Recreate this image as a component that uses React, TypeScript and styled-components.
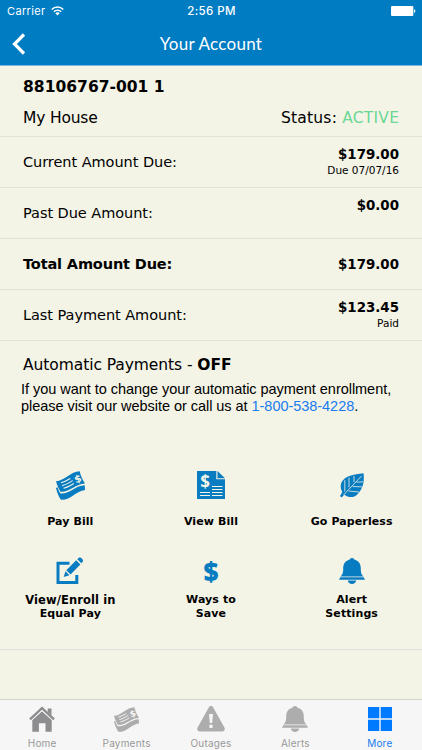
import React from "react";
import styled, { createGlobalStyle } from "styled-components";

const rows = [
  { label: "Current Amount Due:", amount: "$179.00", note: "Due 07/07/16" },
  { label: "Past Due Amount:", amount: "$0.00", note: "\u00a0" },
  { label: "Total Amount Due:", amount: "$179.00", strong: true },
  { label: "Last Payment Amount:", amount: "$123.45", note: "Paid" },
];

const BackIcon = () => (
  <svg width="14" height="22" viewBox="0 0 14 22" fill="none">
    <path d="M12 1.5 2.5 11 12 20.5" stroke="#fff" strokeWidth="3.2" />
  </svg>
);

const WifiIcon = () => (
  <svg width="13" height="10" viewBox="0 0 13 10" fill="none" stroke="#fff">
    <path d="M.7 3.5a8.2 8.2 0 0 1 11.6 0" strokeWidth="1.5" />
    <path d="M2.8 5.8a5.2 5.2 0 0 1 7.4 0" strokeWidth="1.5" />
    <path d="M4.4 7.3a3 3 0 0 1 4.2 0L6.5 9.5z" fill="#fff" stroke="none" />
  </svg>
);

const BatteryIcon = () => (
  <svg width="25" height="10" viewBox="0 0 25 10" fill="#fff">
    <rect width="22.3" height="10" rx="1" />
    <path d="M23 3.2c1.8.3 1.8 3.3 0 3.6z" />
  </svg>
);

const BillsIcon = ({ cut, size = 29 }: { cut: string; size?: number }) => (
  <svg width={size} height={size} viewBox="0 0 29 29">
    <path
      d="M0 10.2C8.500 9.800 14.500.4 23.700.2c.9 4.400 2.700 8.500 5.300 12.200-9.500.5-15.500 9-24.500 8.300C2.500 17.500 1 14 0 10.200z"
      fill="currentColor"
    />
    <path
      d="M0 16.900 1.400 16.300c.8 2.200 1.700 4.200 2.900 6.100 9.700.7 14.700-8 24.500-8.200l.2 4.800C19.700 20 14.800 29.400 5 28.800 2.600 25.200 1 21.200 0 16.900z"
      fill="currentColor"
    />
    <path
      d="M5 11.800c3.200-.9 6.300-2.500 9.300-4.300M6.200 14.600c3.700-.9 7.200-2.900 10.500-5M7.500 17.300c3.700-.8 7-2.700 10.300-4.800"
      stroke={cut}
      strokeWidth="1.100"
      fill="none"
    />
    <BillSign x="21.800" y="11.200" fill={cut} transform="rotate(-20 21.800 7.500)">
      $
    </BillSign>
  </svg>
);

const DocumentIcon = () => (
  <svg width="28" height="28" viewBox="0 0 28 28">
    <path d="M0 0h19.300v8.300H28V28H0z" fill="currentColor" />
    <path d="M20.500 0v7.200H28z" fill="currentColor" />
    <path
      d="M15 15.500h10.500M15 18.500h10.500M3 21.500h10M15 21.500h10.500M3 24.500h10M15 24.500h10.500"
      stroke="#f3f3e6"
      strokeWidth="1"
    />
    <DocumentSign x="8" y="16.500">
      $
    </DocumentSign>
  </svg>
);

const LeafIcon = () => (
  <svg width="24" height="25" viewBox="0 0 24 25">
    <path
      d="M23.500.200C13 1.400 5.500 3 2 8.500c-2 3.500-1.500 7 .300 10.500L0 23l1.600 1.500L4.300 21.700c4 3 8.600 3.200 12.200.500C22.300 17.600 24.800 9.300 23.500.200z"
      fill="currentColor"
    />
    <path
      d="M3.500 22 21.500 3M4.800 18.500V7.200M9 14.500V4.600M14 9V3M8.500 18l10.500 1M12.700 13.500l9.500.400M16.500 9.200l6.500-.400"
      stroke="#f3f3e6"
      strokeWidth=".8"
      fill="none"
    />
  </svg>
);

const EditIcon = () => (
  <svg width="28" height="28" viewBox="0 0 28 28">
    <path
      d="M13.500 6.300H2v19.200h18.800V18"
      stroke="currentColor"
      strokeWidth="3"
      fill="none"
    />
    <path
      d="m7.700 20 1.800-5.700 3.900 3.900zM10.300 13.200 20.200 3.300l4.200 4.200-9.900 9.900zM21.300 2.300l1.500-1.500C24.500-.600 28.200 2.900 26.700 4.800L25.300 6.300z"
      fill="currentColor"
    />
  </svg>
);

const BellIcon = () => (
  <svg width="26" height="26" viewBox="0 0 26 26" fill="currentColor">
    <path d="M13 0c1.300 0 2.300.700 2.500 1.800 4.500 1.100 6.300 4.400 6.300 8.700 0 4.300.600 6 2.700 7.900h-23c2.100-1.900 2.700-3.600 2.700-7.900 0-4.300 1.800-7.600 6.300-8.700C10.700.700 11.700 0 13 0z" />
    <path d="M1.300 19.200h23.400l1.300 2.500H0zM8.800 22.500h8.400c-.300 2-2 3.500-4.200 3.500s-3.900-1.500-4.200-3.500z" />
  </svg>
);

const HouseIcon = () => (
  <svg width="26" height="26" viewBox="0 0 26 26">
    <path
      d="M18.700 2.500h3.800v7l-3.800-3.500zM13 5.200 22.700 14v11.800h-6.200v-8.600H9.900v8.600H3.300V14z"
      fill="currentColor"
    />
    <path
      d="m1 13.300 12-11.200 12 11.200"
      fill="none"
      stroke="currentColor"
      strokeWidth="2.500"
    />
    <path
      d="m2.600 14.300 10.400-9.700 10.400 9.700"
      fill="none"
      stroke="#f6f6f6"
      strokeWidth=".8"
    />
  </svg>
);

const WarningIcon = () => (
  <svg width="28" height="26" viewBox="0 0 28 26">
    <path
      d="M11.800 1.500c1-1.900 3.400-1.900 4.400 0l11.200 20c1 2-.1 4-2.200 4H2.800c-2.100 0-3.200-2-2.200-4z"
      fill="currentColor"
    />
    <path d="M12 8h4l-.8 9h-2.400zM12.400 18.800h3.200V22h-3.200z" fill="#f6f6f6" />
  </svg>
);

const GridIcon = () => (
  <svg width="24" height="24" viewBox="0 0 24 24" fill="currentColor">
    <path d="M0 0h11.300v11.300H0zM12.700 0H24v11.300H12.700zM0 12.700h11.300V24H0zM12.700 12.700H24V24H12.700z" />
  </svg>
);

const actions = [
  { lines: ["Pay Bill"], icon: <BillsIcon cut="#f3f3e6" /> },
  { lines: ["View Bill"], icon: <DocumentIcon /> },
  { lines: ["Go Paperless"], icon: <LeafIcon /> },
  { lines: ["View/Enroll in", "Equal Pay"], icon: <EditIcon /> },
  { lines: ["Ways to", "Save"], sign: true },
  { lines: ["Alert", "Settings"], icon: <BellIcon /> },
];

const tabs = [
  { title: "Home", icon: <HouseIcon />, color: "#8d8d8f" },
  { title: "Payments", icon: <BillsIcon cut="#f6f6f6" size={25} />, color: "#adadad" },
  { title: "Outages", icon: <WarningIcon />, color: "#adadad" },
  { title: "Alerts", icon: <BellIcon />, color: "#adadad" },
  { title: "More", icon: <GridIcon />, color: "#007aff", active: true },
];

export default function App() {
  return (
    <Screen>
      <GlobalStyle />
      <Header>
        <StatusBar>
          <Carrier>
            Carrier <WifiIcon />
          </Carrier>
          <Time>2:56 PM</Time>
          <Battery>
            <BatteryIcon />
          </Battery>
        </StatusBar>
        <NavBar>
          <BackButton aria-label="Back">
            <BackIcon />
          </BackButton>
          <Title>Your Account</Title>
        </NavBar>
      </Header>
      <Account>
        <AccountNumber>88106767-001 1</AccountNumber>
        <AccountLine>
          <HouseName>My House</HouseName>
          <Status>
            Status: <Active>ACTIVE</Active>
          </Status>
        </AccountLine>
      </Account>
      {rows.map((row) => (
        <Row key={row.label}>
          <Label $strong={row.strong}>{row.label}</Label>
          <Values>
            <Amount>{row.amount}</Amount>
            {row.note && <Note>{row.note}</Note>}
          </Values>
        </Row>
      ))}
      <Automatic>
        <AutomaticTitle>
          Automatic Payments - <b>OFF</b>
        </AutomaticTitle>
        <Help>
          <HelpLine>
            If you want to change your automatic payment enrollment,
          </HelpLine>
          <HelpLine>
            please visit our website or call us at <Phone>1-800-538-4228</Phone>.
          </HelpLine>
        </Help>
      </Automatic>
      <Actions>
        {actions.map((action) => (
          <Action key={action.lines[0]}>
            <ActionIcon $tall={action.lines.length === 1}>
              {action.sign ? <Dollar>$</Dollar> : action.icon}
            </ActionIcon>
            {action.lines.map((line) => (
              <ActionLine key={line} $wide={line.includes("/")}>
                {line}
              </ActionLine>
            ))}
          </Action>
        ))}
      </Actions>
      <TabBar>
        {tabs.map((tab) => (
          <Tab key={tab.title} $color={tab.color}>
            <TabIcon>{tab.icon}</TabIcon>
            <TabTitle $active={tab.active}>{tab.title}</TabTitle>
          </Tab>
        ))}
      </TabBar>
    </Screen>
  );
}

const GlobalStyle = createGlobalStyle`
  * {
    box-sizing: border-box;
  }
  body {
    margin: 0;
    background: #f3f3e6;
  }
  svg {
    display: block;
  }
`;

const Screen = styled.div`
  display: flex;
  flex-direction: column;
  width: 422px;
  height: 750px;
  overflow: hidden;
  background: #f3f3e6;
  color: #000;
  font-family: "DejaVu Sans", sans-serif;
`;

const Header = styled.header`
  height: 66px;
  flex: none;
  background: #007cc3;
  border-bottom: 1px solid #78b9df;
  color: #fff;
`;

const StatusBar = styled.div`
  display: grid;
  grid-template-columns: 1fr auto 1fr;
  align-items: center;
  height: 22px;
  padding: 0 6px 0 7px;
  font-family: Inter, sans-serif;
  font-size: 11px;
`;

const Carrier = styled.div`
  display: flex;
  align-items: center;
  gap: 5px;
  letter-spacing: 0.35px;
`;

const Time = styled.div`
  font-weight: 500;
  font-size: 11.5px;
  letter-spacing: 0.4px;
`;

const Battery = styled.div`
  display: flex;
  justify-content: flex-end;
`;

const NavBar = styled.div`
  display: grid;
  grid-template-columns: 40px 1fr 40px;
  align-items: center;
  height: 43px;
`;

const BackButton = styled.button`
  padding: 0 0 0 12px;
  border: 0;
  background: none;
`;

const Title = styled.h1`
  margin: 0;
  text-align: center;
  font-family: Lato, sans-serif;
  font-size: 17px;
  font-weight: 400;
  letter-spacing: 0.25px;
`;

const Account = styled.section`
  height: 71px;
  flex: none;
  padding: 11px 23px 0;
  border-bottom: 1px solid #e0e1d8;
`;

const AccountNumber = styled.div`
  font-size: 15.5px;
  line-height: 20px;
  font-weight: 700;
  letter-spacing: 0.03px;
`;

const AccountLine = styled.div`
  display: flex;
  justify-content: space-between;
  margin-top: 11px;
  font-size: 15.5px;
  line-height: 20px;
`;

const HouseName = styled.span`
  letter-spacing: -0.18px;
`;

const Status = styled.span`
  letter-spacing: 0.22px;
  margin-right: -0.2px;
`;

const Active = styled.span`
  color: #6bd795;
`;

const Row = styled.div`
  display: flex;
  align-items: center;
  justify-content: space-between;
  height: 51px;
  flex: none;
  padding: 0 23px;
  border-bottom: 1px solid #e0e1d8;
`;

const Label = styled.span<{ $strong?: boolean }>`
  font-size: 14.5px;
  font-weight: ${({ $strong }) => ($strong ? 700 : 400)};
  letter-spacing: ${({ $strong }) => ($strong ? "-0.14px" : "-0.05px")};
`;

const Values = styled.div`
  text-align: right;
`;

const Amount = styled.div`
  font-size: 13.4px;
  line-height: 17px;
  font-weight: 700;
`;

const Note = styled.div`
  font-size: 10.5px;
  line-height: 15px;
`;

const Automatic = styled.section`
  height: 119px;
  flex: none;
  padding: 14px 21px 0;
`;

const AutomaticTitle = styled.div`
  padding-left: 2px;
  font-size: 15.5px;
  line-height: 20px;
  letter-spacing: -0.07px;
`;

const Help = styled.div`
  margin-top: 6px;
  font-family: "Liberation Sans", sans-serif;
  font-size: 14.5px;
  line-height: 17px;
`;

const HelpLine = styled.div`
  white-space: nowrap;
  letter-spacing: -0.04px;
`;

const Phone = styled.span`
  color: #187bf0;
`;

const Actions = styled.section`
  display: grid;
  grid-template-columns: repeat(3, 1fr);
  grid-template-rows: 86px 104px;
  height: 190px;
  flex: none;
  border-bottom: 1px solid #dfe1dc;
`;

const Action = styled.div`
  display: flex;
  flex-direction: column;
  align-items: center;
`;

const ActionIcon = styled.div<{ $tall: boolean }>`
  display: flex;
  align-items: center;
  justify-content: center;
  height: 50px;
  margin-bottom: ${({ $tall }) => ($tall ? "5px" : "-3px")};
  color: #087cc1;
`;

const ActionLine = styled.div<{ $wide: boolean }>`
  white-space: nowrap;
  font-size: ${({ $wide }) => ($wide ? "11.5px" : "11px")};
  line-height: 14px;
  font-weight: 700;
  letter-spacing: 0.1px;
`;

const Dollar = styled.span`
  font-family: "Open Sans", sans-serif;
  font-size: 26px;
  line-height: 30px;
  font-weight: 800;
`;

const BillSign = styled.text`
  font-family: "DejaVu Sans", sans-serif;
  font-size: 10px;
  font-weight: 700;
  text-anchor: middle;
`;

const DocumentSign = styled.text`
  font-family: "Open Sans", sans-serif;
  font-size: 17px;
  font-weight: 700;
  text-anchor: middle;
  fill: #f3f3e6;
`;

const TabBar = styled.nav`
  display: grid;
  grid-template-columns: repeat(5, 1fr);
  height: 51px;
  flex: none;
  margin-top: auto;
  background: #f6f6f6;
  border-top: 1px solid #d3d4ce;
`;

const Tab = styled.div<{ $color: string }>`
  display: flex;
  flex-direction: column;
  align-items: center;
  color: ${({ $color }) => $color};
`;

const TabIcon = styled.div`
  display: flex;
  align-items: center;
  height: 38px;
`;

const TabTitle = styled.div<{ $active?: boolean }>`
  color: ${({ $active }) => ($active ? "#187bf0" : "#999")};
  font-family: Inter, sans-serif;
  font-size: 10px;
  line-height: 12px;
  letter-spacing: 0.2px;
  margin-top: -1px;
`;
